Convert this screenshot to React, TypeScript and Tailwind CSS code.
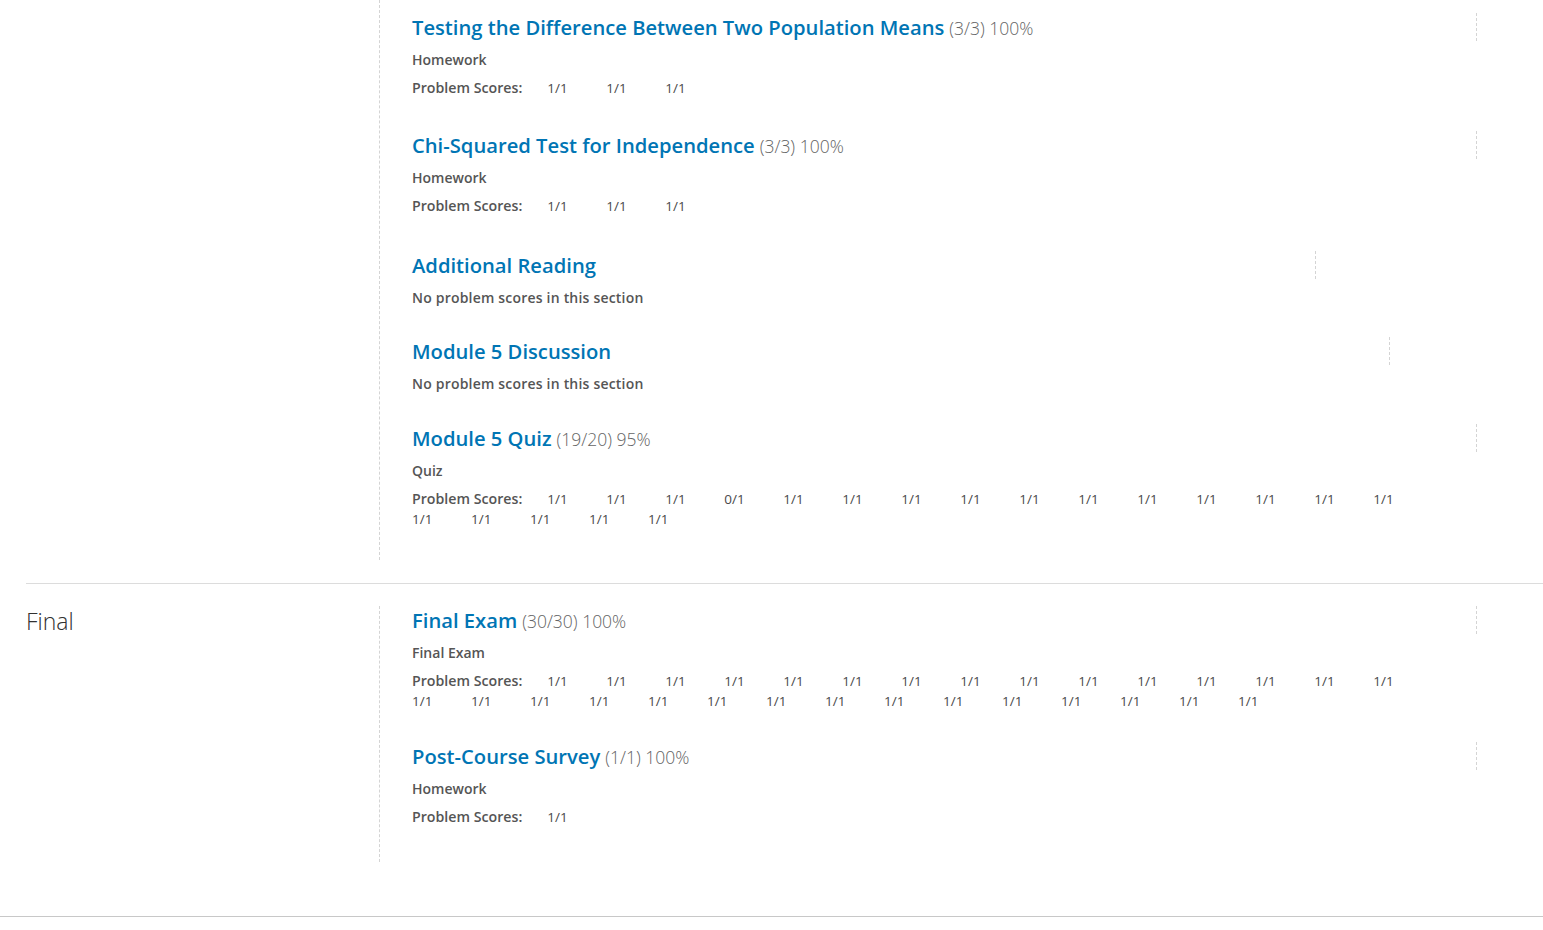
import React from "react";

type Item = {
  title: string;
  score?: string;
  category?: string;
  scores?: string[];
  lineW: string;
  mb: string;
};

const ones = (n: number) => Array.from({ length: n }, () => "1/1");

const section1: Item[] = [
  { title: "Testing the Difference Between Two Population Means", score: "(3/3) 100%", category: "Homework", scores: ones(3), lineW: "w-[1065px]", mb: "mb-[33px]" },
  { title: "Chi-Squared Test for Independence", score: "(3/3) 100%", category: "Homework", scores: ones(3), lineW: "w-[1065px]", mb: "mb-[35px]" },
  { title: "Additional Reading", lineW: "w-[904px]", mb: "mb-[29px]" },
  { title: "Module 5 Discussion", lineW: "w-[978px]", mb: "mb-[30px]" },
  {
    title: "Module 5 Quiz",
    score: "(19/20) 95%",
    category: "Quiz",
    scores: ["1/1", "1/1", "1/1", "0/1", ...ones(16)],
    lineW: "w-[1065px]",
    mb: "mb-0",
  },
];

const section2: Item[] = [
  { title: "Final Exam", score: "(30/30) 100%", category: "Final Exam", scores: ones(30), lineW: "w-[1065px]", mb: "mb-[31px]" },
  { title: "Post-Course Survey", score: "(1/1) 100%", category: "Homework", scores: ones(1), lineW: "w-[1065px]", mb: "mb-0" },
];

function Entry({ it }: { it: Item }) {
  return (
    <div className={it.mb}>
      <div className={`${it.lineW} flex items-center h-[28px] border-r border-dashed border-[#d4d4d4]`}>
        <h3 className="flex items-baseline h-[28px] whitespace-nowrap">
          <span className="text-[20.2px] leading-[28px] font-semibold text-[#0075b4]">{it.title}</span>
          {it.score && <span className="ml-[5px] text-[17.5px] leading-none font-light text-[#646464]">{it.score}</span>}
        </h3>
      </div>
      {it.scores ? (
        <>
          <p className="mt-[9px] text-[14px] leading-5 font-semibold text-[#555]">{it.category}</p>
          <div className="mt-2 w-[1064px] flex flex-wrap text-[13.5px] leading-5 text-[#4a4a4a]">
            <span className="text-[14.2px] font-semibold mr-[25px] text-[#555]">Problem Scores:</span>
            {it.scores.map((s, i) => (
              <span key={i} className="inline-block w-[19px] mr-[40px] whitespace-nowrap">{s}</span>
            ))}
          </div>
        </>
      ) : (
        <p className="mt-[9px] text-[14px] leading-5 font-semibold tracking-[0.2px] text-[#555]">No problem scores in this section</p>
      )}
    </div>
  );
}

export default function App() {
  return (
    <div className="min-h-[930px] bg-white" style={{ fontFamily: '"Open Sans", "Noto Sans", sans-serif' }}>
      <div className="ml-[26px] border-b border-[#dcdcdc] pb-[23px] flex">
        <div className="w-[353px]" />
        <div className="border-l border-dashed border-[#d4d4d4] pl-[32px] pt-[13px] pb-[31px]">
          {section1.map((it, i) => (
            <Entry key={i} it={it} />
          ))}
        </div>
      </div>
      <div className="ml-[26px] pt-[22px] flex">
        <div className="w-[353px]">
          <h2 className="text-[23px] leading-[30px] font-light text-[#313131]">Final</h2>
        </div>
        <div className="border-l border-dashed border-[#d4d4d4] pl-[32px] pt-0 pb-[35px]">
          {section2.map((it, i) => (
            <Entry key={i} it={it} />
          ))}
        </div>
      </div>
      <div className="mt-[54px] border-t border-[#c8c8c8] h-[14px]" />
    </div>
  );
}
